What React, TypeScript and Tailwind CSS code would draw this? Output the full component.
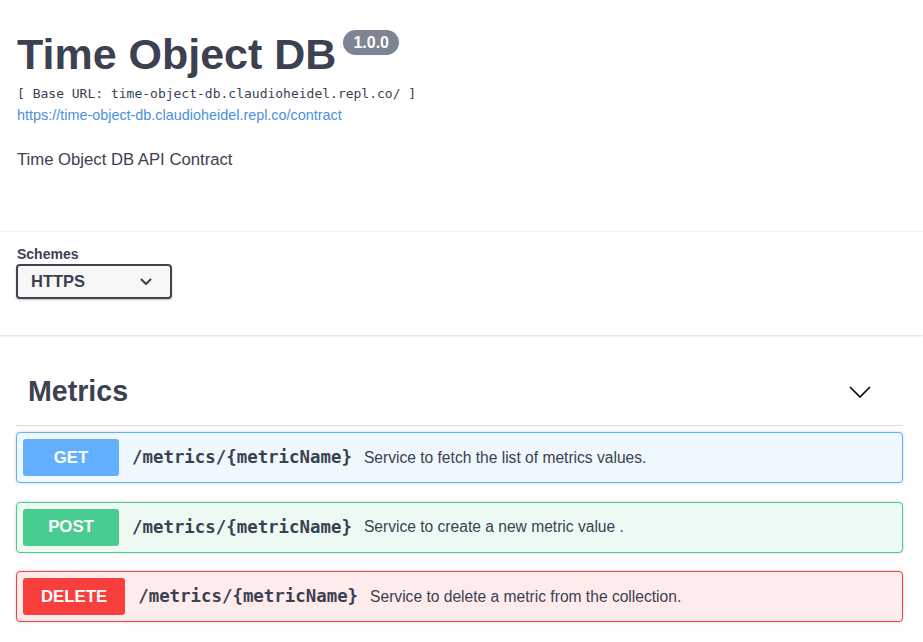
const sans = { fontFamily: '"Liberation Sans", Arial, sans-serif' }

const ops = [
  {
    method: 'GET',
    path: '/metrics/{metricName}',
    summary: 'Service to fetch the list of metrics values.',
    box: 'border-[#61affe] bg-[#eff7ff]',
    badge: 'bg-[#61affe]',
  },
  {
    method: 'POST',
    path: '/metrics/{metricName}',
    summary: 'Service to create a new metric value .',
    box: 'border-[#49cc90] bg-[#edfaf4]',
    badge: 'bg-[#49cc90]',
  },
  {
    method: 'DELETE',
    path: '/metrics/{metricName}',
    summary: 'Service to delete a metric from the collection.',
    box: 'border-[#f93e3e] bg-[#feecec]',
    badge: 'bg-[#f93e3e]',
  },
]

export default function App() {
  return (
    <div className="min-h-screen bg-white text-[#3b4151] font-['Liberation_Sans',Arial,sans-serif]" style={sans}>
      {/* Info */}
      <div className="px-4 pt-[33px] pb-[61px]">
        <div className="flex items-start">
          <h2 className="text-[43px] leading-[43px] font-bold pl-px">Time Object DB</h2>
          <span className="ml-[7px] -mt-[3px] h-[25px] px-[10px] rounded-full bg-[#7d8492] text-white text-[16px] leading-[25px] font-bold">
            1.0.0
          </span>
        </div>
        <div className="mt-[10px] pl-px font-['DejaVu_Sans_Mono',monospace] text-[13px] leading-4 text-[#3b4151]">
          [ Base URL: time-object-db.claudioheidel.repl.co/ ]
        </div>
        <a href="#" className="block mt-[5px] pl-px text-[14.4px] leading-[17px] text-[#4990e2]">
          https://time-object-db.claudioheidel.repl.co/contract
        </a>
        <p className="mt-[26px] pl-px text-[16.7px] leading-5">Time Object DB API Contract</p>
      </div>

      {/* Schemes */}
      <div className="border-t border-[#f3f3f3] px-4 pt-[14px] pb-[36px] shadow-[0_1px_2px_0_rgba(0,0,0,0.15)]">
        <div className="text-[14px] leading-[17px] font-bold pl-px">Schemes</div>
        <button className="mt-px flex items-center justify-between w-[156px] h-[35px] pl-[13px] pr-[18px] border-2 border-[#41444e] rounded bg-[#f7f7f7] shadow-[0_1px_2px_0_rgba(0,0,0,0.25)] text-[16.5px] font-bold">
          HTTPS
          <svg width="12" height="8" viewBox="0 0 12 8" fill="none">
            <path d="M1.5 1.5 6 6l4.5-4.5" stroke="#3b4151" strokeWidth="2" strokeLinecap="round" strokeLinejoin="round" />
          </svg>
        </button>
      </div>

      {/* Metrics tag */}
      <div className="pl-4 pr-5 mt-[40px]">
        <div className="flex items-center justify-between h-[51px] pb-4 border-b border-[#d8dae0]">
          <h3 className="pl-3 -mt-[2px] text-[28.6px] leading-[35px] font-bold">Metrics</h3>
          <svg className="mr-[32px]" width="22" height="12" viewBox="0 0 22 12" fill="none">
            <path d="M1 1l10 10L21 1" stroke="#000" strokeWidth="1.6" />
          </svg>
        </div>

        <div className="mt-[6px] flex flex-col gap-[18.5px]">
          {ops.map((op) => (
            <div key={op.method} className={`flex items-center border rounded p-[6px] shadow-[0_0_3px_rgba(0,0,0,0.19)] ${op.box}`}>
              <span className={`min-w-[96px] h-[37px] px-[18px] rounded-[3px] flex items-center justify-center text-white text-[16.8px] font-bold ${op.badge}`}>
                {op.method}
              </span>
              <span className="ml-[13px] font-['DejaVu_Sans_Mono',monospace] font-bold text-[17.4px]">{op.path}</span>
              <span className="ml-[12px] text-[15.6px]">{op.summary}</span>
            </div>
          ))}
        </div>
      </div>
    </div>
  )
}
